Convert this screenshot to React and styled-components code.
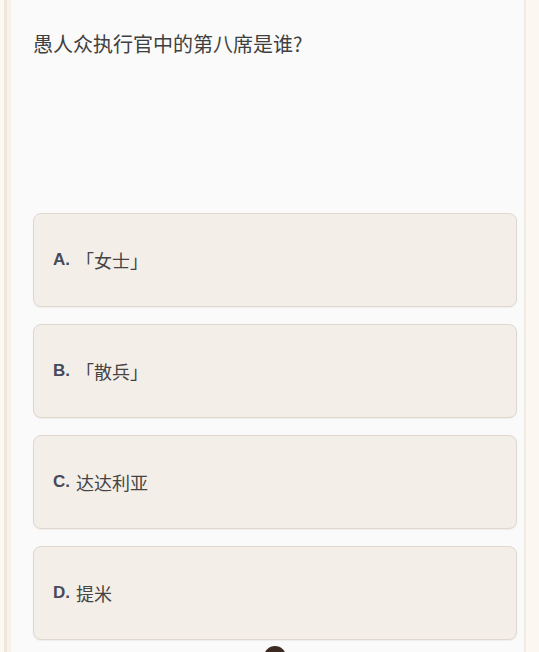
import styled, { createGlobalStyle } from "styled-components";

const GlobalStyle = createGlobalStyle`
  html, body {
    margin: 0;
    padding: 0;
    background: #fcf8f1;
    font-family: "Noto Sans CJK SC", "Noto Sans", sans-serif;
  }
`;

const options = [
  { key: "A", text: "「女士」" },
  { key: "B", text: "「散兵」" },
  { key: "C", text: "达达利亚" },
  { key: "D", text: "提米" },
];

const App = () => {
  return (
    <Page>
      <GlobalStyle />
      <Panel>
        <Question>愚人众执行官中的第八席是谁?</Question>
        <OptionList>
          {options.map((opt) => (
            <OptionCard key={opt.key}>
              <OptionKey>{opt.key}.</OptionKey>
              <OptionText>{opt.text}</OptionText>
            </OptionCard>
          ))}
        </OptionList>
        <Footer>
          <Knob />
        </Footer>
      </Panel>
    </Page>
  );
};

export default App;

const Page = styled.div`
  width: 539px;
  height: 652px;
  overflow: hidden;
  padding-left: 4px;
  box-sizing: border-box;
`;

const Panel = styled.div`
  width: 522px;
  height: 100%;
  box-sizing: border-box;
  background: #fafafa;
  border-left: 3px solid #ece8de;
  border-right: 2px solid #f0ece4;
  padding: 0 7px 0 26px;
  box-shadow: inset 4px 0 0 #f8f3e9;
`;

const Question = styled.div`
  padding-top: 30px;
  font-size: 20px;
  line-height: 28px;
  color: #404040;
  height: 213px;
  box-sizing: border-box;
`;

const OptionList = styled.div`
  display: flex;
  flex-direction: column;
  gap: 17px;
`;

const OptionCard = styled.div`
  height: 94px;
  box-sizing: border-box;
  background: #f4eee8;
  border: 1px solid #e0d7ce;
  border-radius: 8px;
  display: flex;
  align-items: center;
  padding-left: 19px;
  box-shadow: 0 1px 1px rgba(120, 100, 80, 0.08);
`;

const OptionKey = styled.span`
  font-family: "Liberation Sans", "Noto Sans", sans-serif;
  font-weight: 700;
  font-size: 17px;
  color: #454a5c;
  margin-right: 6px;
`;

const OptionText = styled.span`
  font-size: 18px;
  color: #444444;
`;

const Footer = styled.div`
  display: flex;
  justify-content: center;
  padding-top: 6px;
`;

const Knob = styled.div`
  width: 22px;
  height: 22px;
  border-radius: 50%;
  background: #3a2a22;
`;
